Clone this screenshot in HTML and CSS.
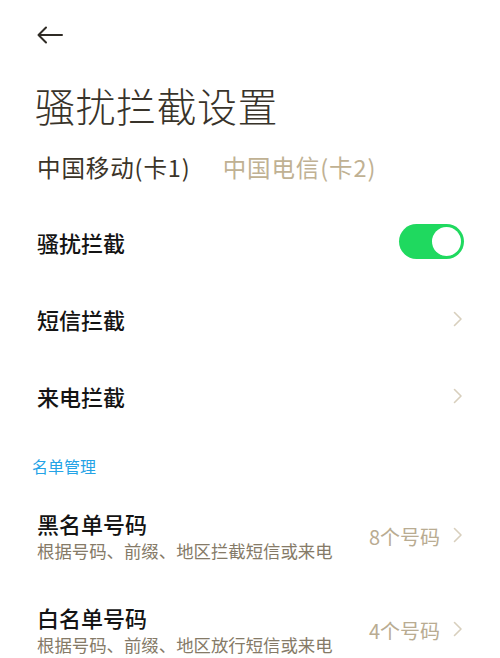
FILE: index.html
```html
<!DOCTYPE html>
<html lang="zh-CN">
<head>
<meta charset="utf-8">
<title>骚扰拦截设置</title>
<link rel="stylesheet" href="styles.css">
</head>
<body>
<div class="page">
  <header class="topbar">
    <svg class="back" width="28" height="18" viewBox="0 0 28 18" aria-hidden="true">
      <path d="M26 9H2.5M10 1.5L2.5 9L10 16.5" fill="none" stroke="#2f2b25" stroke-width="2" stroke-linecap="round" stroke-linejoin="round"/>
    </svg>
  </header>
  <h1 class="title">骚扰拦截设置</h1>
  <nav class="tabs">
    <span class="tab tab-active">中国移动(卡1)</span>
    <span class="tab tab-idle">中国电信(卡2)</span>
  </nav>

  <div class="row">
    <span class="row-label">骚扰拦截</span>
    <span class="switch"><span class="knob"></span></span>
  </div>
  <div class="row">
    <span class="row-label">短信拦截</span>
    <svg class="chev" width="10" height="16" viewBox="0 0 10 16" aria-hidden="true"><path d="M1.5 1.5L8 8L1.5 14.5" fill="none" stroke="#d8cfbd" stroke-width="1.6" stroke-linecap="round" stroke-linejoin="round"/></svg>
  </div>
  <div class="row">
    <span class="row-label">来电拦截</span>
    <svg class="chev" width="10" height="16" viewBox="0 0 10 16" aria-hidden="true"><path d="M1.5 1.5L8 8L1.5 14.5" fill="none" stroke="#d8cfbd" stroke-width="1.6" stroke-linecap="round" stroke-linejoin="round"/></svg>
  </div>

  <div class="section">名单管理</div>

  <div class="list-row">
    <div class="list-text">
      <div class="row-label">黑名单号码</div>
      <div class="sub">根据号码、前缀、地区拦截短信或来电</div>
    </div>
    <span class="value">8个号码</span>
    <svg class="chev" width="10" height="16" viewBox="0 0 10 16" aria-hidden="true"><path d="M1.5 1.5L8 8L1.5 14.5" fill="none" stroke="#d8cfbd" stroke-width="1.6" stroke-linecap="round" stroke-linejoin="round"/></svg>
  </div>
  <div class="list-row">
    <div class="list-text">
      <div class="row-label">白名单号码</div>
      <div class="sub">根据号码、前缀、地区放行短信或来电</div>
    </div>
    <span class="value">4个号码</span>
    <svg class="chev" width="10" height="16" viewBox="0 0 10 16" aria-hidden="true"><path d="M1.5 1.5L8 8L1.5 14.5" fill="none" stroke="#d8cfbd" stroke-width="1.6" stroke-linecap="round" stroke-linejoin="round"/></svg>
  </div>
</div>
</body>
</html>
```
FILE: styles.css
```css
html, body {
  margin: 0;
  padding: 0;
  background: #ffffff;
}
body {
  font-family: "Noto Sans CJK SC", "Noto Sans", sans-serif;
  color: #1a1a1a;
  overflow: hidden;
}
.page {
  width: 500px;
  height: 658px;
  box-sizing: border-box;
  padding: 0 37px 0 37px;
}
.topbar {
  height: 70px;
  display: flex;
  align-items: center;
}
.back {
  display: block;
  margin-left: -1px;
}
.title {
  margin: 0 0 0 -2px;
  height: 70px;
  line-height: 70px;
  font-size: 40px;
  font-weight: 300;
  color: #38332a;
  letter-spacing: 0.5px;
}
.tabs {
  margin-top: 12px;
  height: 30px;
  display: flex;
  gap: 32px;
  align-items: center;
}
.tab {
  font-size: 23.5px;
  line-height: 30px;
  font-weight: 400;
  letter-spacing: 0.9px;
}
.tab-active { color: #3b3428; }
.tab-idle { color: #c0b193; }

.row {
  height: 77px;
  display: flex;
  align-items: center;
  justify-content: space-between;
}
.tabs + .row { margin-top: 21px; }
.row-label {
  font-size: 22px;
  line-height: 30px;
  font-weight: 500;
  color: #141414;
}
.switch {
  position: relative;
  width: 65px;
  height: 35px;
  border-radius: 18px;
  background: #1fd95f;
  margin-right: -1px;
}
.knob {
  position: absolute;
  right: 3px;
  top: 3px;
  width: 29px;
  height: 29px;
  border-radius: 50%;
  background: #ffffff;
}
.chev {
  display: block;
  flex: none;
}
.section {
  margin: 22px 0 12px -5px;
  font-size: 16px;
  line-height: 20px;
  color: #24a3e6;
}
.list-row {
  display: flex;
  align-items: center;
  padding: 20px 0 20px 0;
}
.list-text {
  flex: 1;
}
.sub {
  font-size: 17.4px;
  line-height: 22px;
  color: #857a67;
  margin-top: 2px;
}
.value {
  font-size: 20px;
  color: #b9ac92;
  margin-right: 13px;
  margin-top: 2px;
}
```
